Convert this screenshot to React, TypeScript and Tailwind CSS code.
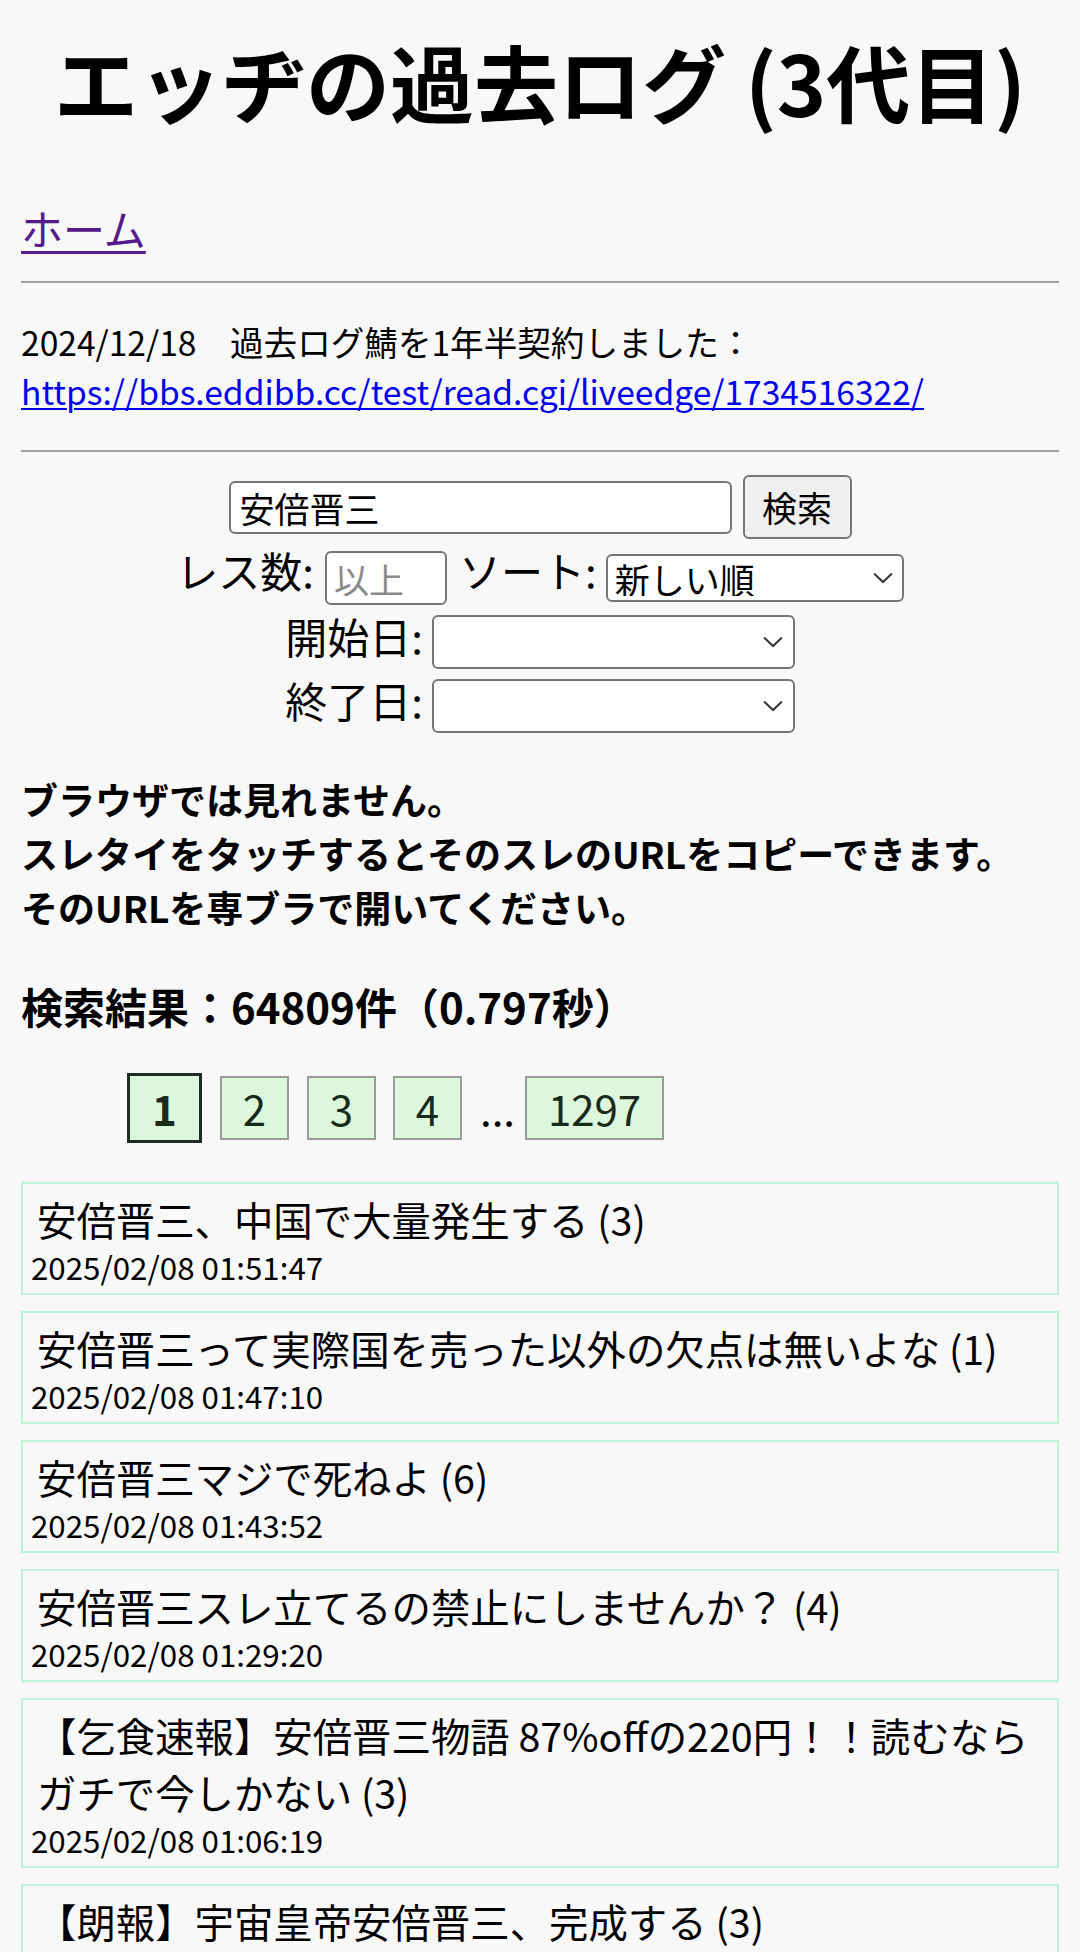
const threads = [
  { title: "安倍晋三、中国で大量発生する (3)", date: "2025/02/08 01:51:47" },
  { title: "安倍晋三って実際国を売った以外の欠点は無いよな (1)", date: "2025/02/08 01:47:10" },
  { title: "安倍晋三マジで死ねよ (6)", date: "2025/02/08 01:43:52" },
  { title: "安倍晋三スレ立てるの禁止にしませんか？ (4)", date: "2025/02/08 01:29:20" },
  { title: "【乞食速報】安倍晋三物語 87%offの220円！！読むならガチで今しかない (3)", date: "2025/02/08 01:06:19" },
  { title: "【朗報】宇宙皇帝安倍晋三、完成する (3)", date: "2025/02/08 00:58:03" },
];

function Chevron({ className }: { className: string }) {
  return (
    <svg className={className} width="20" height="11" viewBox="0 0 20 11" fill="none">
      <polyline points="1,1 10,9.5 19,1" stroke="#333" strokeWidth="2" />
    </svg>
  );
}

function Select({ value, box, chevron }: { value: string; box: string; chevron: string }) {
  return (
    <div className={`relative ${box}`}>
      <select className="appearance-none w-full h-full bg-white border-2 border-[#767676] rounded-[6px] pl-[7px] text-[35px] leading-none text-black">
        <option>{value}</option>
      </select>
      <Chevron className={`pointer-events-none absolute top-1/2 -translate-y-1/2 ${chevron}`} />
    </div>
  );
}

export default function App() {
  return (
    <div className="min-h-screen bg-[#f8f8f8] px-[21px] pb-[60px] text-black font-['Noto_Sans_CJK_JP','Noto_Sans',sans-serif]">
      <h1 className="pt-[31px] text-center text-[84px] leading-[100px] font-bold">エッヂの過去ログ (3代目)</h1>

      <div className="mt-[67px] text-[42px] leading-[60px]">
        <a href="#" className="text-[#551a8b] underline decoration-[3px] underline-offset-[5px]">ホーム</a>
      </div>

      <hr className="mt-[23px] border-t-2 border-[#a0a0a0]" />

      <div className="mt-[34px] text-[33.6px] leading-[49px]">
        <p>2024/12/18　過去ログ鯖を1年半契約しました：</p>
        <a href="#" className="text-[#0000ee] underline decoration-2 underline-offset-[3px]">
          https://bbs.eddibb.cc/test/read.cgi/liveedge/1734516322/
        </a>
      </div>

      <hr className="mt-[35px] border-t-2 border-[#a0a0a0]" />

      <form className="mt-[23px]">
        <div className="flex h-[64px] items-center justify-center">
          <input
            defaultValue="安倍晋三"
            className="w-[503px] h-[53px] bg-white border-2 border-[#767676] rounded-[6px] px-[9px] text-[35px] text-black"
          />
          <button type="button" className="ml-[11px] w-[109px] h-[64px] bg-[#efefef] border-2 border-[#767676] rounded-[6px] text-[35px]">
            検索
          </button>
        </div>

        <div className="mt-[12px] flex h-[54px] items-center justify-center">
          <span className="text-[42px] leading-[60px] pb-[17px]">レス数:</span>
          <input
            placeholder="以上"
            className="ml-[11px] w-[122px] h-[54px] bg-white border-2 border-[#767676] rounded-[6px] px-[7px] text-[35px] placeholder:text-[#8a8a8a]"
          />
          <span className="ml-[12px] text-[42px] leading-[60px] pb-[17px]">ソート:</span>
          <Select value="新しい順" box="ml-[9px] w-[298px] h-[48px]" chevron="right-[11px]" />
        </div>

        <div className="mt-[10px] flex h-[54px] items-center justify-center">
          <span className="text-[42px] leading-[60px] pb-[13px]">開始日:</span>
          <Select value="" box="ml-[9px] w-[363px] h-[54px]" chevron="right-[12px]" />
        </div>

        <div className="mt-[10px] flex h-[54px] items-center justify-center">
          <span className="text-[42px] leading-[60px] pb-[13px]">終了日:</span>
          <Select value="" box="ml-[9px] w-[363px] h-[54px]" chevron="right-[12px]" />
        </div>
      </form>

      <div className="mt-[39px] text-[37px] leading-[54px] font-bold">
        <p>ブラウザでは見れません。</p>
        <p>スレタイをタッチするとそのスレのURLをコピーできます。</p>
        <p>そのURLを専ブラで開いてください。</p>
      </div>

      <p className="mt-[42px] text-[42px] leading-[60px] font-bold">検索結果：64809件（0.797秒）</p>

      <div className="mt-[37px] h-[70px] pl-[106px] flex items-center text-[42px] leading-none text-[#1a2a1a]">
        <span className="w-[75px] h-[70px] flex items-center justify-center border-[3px] border-[#1e2b1e] bg-[#dcf7dc] font-bold">1</span>
        <span className="ml-[18px] w-[69px] h-[64px] flex items-center justify-center border-2 border-[#9a9a9a] bg-[#dcf7dc]">2</span>
        <span className="ml-[18px] w-[69px] h-[64px] flex items-center justify-center border-2 border-[#9a9a9a] bg-[#dcf7dc]">3</span>
        <span className="ml-[17px] w-[69px] h-[64px] flex items-center justify-center border-2 border-[#9a9a9a] bg-[#dcf7dc]">4</span>
        <span className="ml-[18px] text-black">...</span>
        <span className="ml-[10px] w-[139px] h-[64px] flex items-center justify-center border-2 border-[#9a9a9a] bg-[#dcf7dc]">1297</span>
      </div>

      <ul className="mt-[39px] flex flex-col gap-[16px]">
        {threads.map((t) => (
          <li key={t.date} className="border-2 border-[#bdf3d6] pt-[6px] pb-[6px]">
            <p className="px-[14px] text-[39.4px] leading-[57px]">{t.title}</p>
            <p className="px-[8px] text-[31.3px] leading-[40px]">{t.date}</p>
          </li>
        ))}
      </ul>
    </div>
  );
}
